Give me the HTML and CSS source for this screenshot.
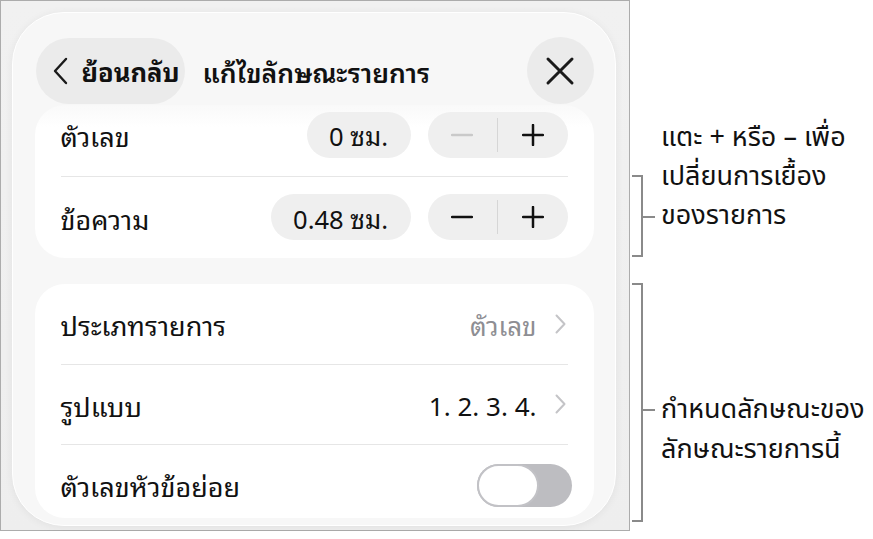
FILE: index.html
```html
<!DOCTYPE html>
<html lang="th">
<head>
<meta charset="utf-8">
<title>แก้ไขลักษณะรายการ</title>
<link rel="stylesheet" href="styles.css">
</head>
<body>
<div class="frame">
  <div class="panel">
    <header class="header">
      <button class="back">
        <svg class="back-chevron" viewBox="0 0 16 28" width="16" height="28"><path d="M14 2 L3 14 L14 26" fill="none" stroke="#1a1a1a" stroke-width="2.4" stroke-linecap="round" stroke-linejoin="round"/></svg>
        <span>ย้อนกลับ</span>
      </button>
      <h1 class="title">แก้ไขลักษณะรายการ</h1>
      <button class="close">
        <svg viewBox="0 0 30 30" width="30" height="30"><path d="M3 3 L27 27 M27 3 L3 27" fill="none" stroke="#1a1a1a" stroke-width="3" stroke-linecap="round"/></svg>
      </button>
    </header>

    <section class="card indent">
      <div class="row row-first">
        <span class="label">ตัวเลข</span>
        <div class="controls">
          <span class="value-pill">0 ซม.</span>
          <div class="stepper">
            <span class="step disabled"><svg viewBox="0 0 22 22" width="22" height="22"><path d="M1 11 H21" stroke="currentColor" stroke-width="2.5" stroke-linecap="round"/></svg></span>
            <span class="step-sep"></span>
            <span class="step"><svg viewBox="0 0 22 22" width="22" height="22"><path d="M1 11 H21 M11 1 V21" stroke="currentColor" stroke-width="2.5" stroke-linecap="round"/></svg></span>
          </div>
        </div>
      </div>
      <div class="row row-second">
        <span class="label">ข้อความ</span>
        <div class="controls">
          <span class="value-pill">0.48 ซม.</span>
          <div class="stepper">
            <span class="step"><svg viewBox="0 0 22 22" width="22" height="22"><path d="M1 11 H21" stroke="currentColor" stroke-width="2.5" stroke-linecap="round"/></svg></span>
            <span class="step-sep"></span>
            <span class="step"><svg viewBox="0 0 22 22" width="22" height="22"><path d="M1 11 H21 M11 1 V21" stroke="currentColor" stroke-width="2.5" stroke-linecap="round"/></svg></span>
          </div>
        </div>
      </div>
    </section>

    <section class="card options">
      <div class="row opt">
        <span class="label">ประเภทรายการ</span>
        <span class="detail muted">ตัวเลข<svg class="chev" viewBox="0 0 11 20" width="11" height="20"><path d="M1.5 1.5 L9.5 10 L1.5 18.5" fill="none" stroke="#c4c4c7" stroke-width="2" stroke-linecap="round" stroke-linejoin="round"/></svg></span>
      </div>
      <div class="row opt">
        <span class="label">รูปแบบ</span>
        <span class="detail">1. 2. 3. 4.<svg class="chev" viewBox="0 0 11 20" width="11" height="20"><path d="M1.5 1.5 L9.5 10 L1.5 18.5" fill="none" stroke="#c4c4c7" stroke-width="2" stroke-linecap="round" stroke-linejoin="round"/></svg></span>
      </div>
      <div class="row opt opt-last">
        <span class="label">ตัวเลขหัวข้อย่อย</span>
        <span class="toggle"><span class="knob"></span></span>
      </div>
    </section>
  </div>
</div>

<aside class="notes">
  <div class="note note-indent">
    <svg class="bracket" viewBox="0 0 26 82" width="26" height="82"><path d="M1 1 H11 V81 H1 M11 42 H24" fill="none" stroke="#8a8a8a" stroke-width="2"/></svg>
    <p class="note-text">แตะ + หรือ – เพื่อ<br>เปลี่ยนการเยื้อง<br>ของรายการ</p>
  </div>
  <div class="note note-style">
    <svg class="bracket" viewBox="0 0 26 239" width="26" height="239"><path d="M1 1 H11 V238 H1 M11 127 H24" fill="none" stroke="#8a8a8a" stroke-width="2"/></svg>
    <p class="note-text">กำหนดลักษณะของ<br>ลักษณะรายการนี้</p>
  </div>
</aside>
</body>
</html>
```

FILE: styles.css
```css
* { box-sizing: border-box; }

body {
  margin: 0;
  background: #ffffff;
  display: flex;
  align-items: flex-start;
  font-family: "Noto Sans Thai Looped", "Noto Sans Thai", "Noto Sans", "DejaVu Sans", sans-serif;
  color: #111111;
}

/* screenshot frame */
.frame {
  width: 630px;
  height: 531px;
  border: 1px solid #acacac;
  background: linear-gradient(180deg, #f1f1f1 0%, #eeeeee 100%);
  padding: 11px 13px 4px 11px;
  flex: none;
}

.panel {
  height: 514px;
  border-radius: 52px;
  background: #f7f7f7;
  border: 1.5px solid #ffffff;
  box-shadow: 0 1px 8px rgba(0, 0, 0, 0.06);
  padding: 24.5px 21.5px 0 21.5px;
  overflow: hidden;
}

/* top bar */
.header {
  display: flex;
  align-items: center;
  height: 66px;
}

button {
  font: inherit;
  color: inherit;
  border: 0;
  margin: 0;
  padding: 0;
}

.back {
  display: flex;
  align-items: center;
  gap: 14px;
  height: 66px;
  margin-left: 1px;
  padding: 0 6px 0 16px;
  border-radius: 33px;
  background: #ebebeb;
  font-size: 25.5px;
  font-weight: 700;
}

.title {
  margin: 0 0 0 17px;
  font-size: 26.5px;
  font-weight: 600;
  flex: 1;
}

.close {
  width: 67px;
  height: 67px;
  border-radius: 50%;
  background: #ebebeb;
  display: flex;
  align-items: center;
  justify-content: center;
}

/* grouped cards */
.card {
  background: #ffffff;
  border-radius: 30px;
  padding: 0 26px;
}

.indent {
  margin-top: 1px;
  background: linear-gradient(180deg, #f9f9f9 0px, #ffffff 22px);
}

.row {
  display: flex;
  align-items: center;
  justify-content: space-between;
  font-size: 27px;
}

.row + .row {
  border-top: 1.5px solid #e6e6e6;
}

.row-first {
  height: 71px;
  padding: 7px 0 18px;
  align-items: center;
}

.row-second {
  height: 82px;
}

.controls {
  display: flex;
  align-items: center;
  gap: 17px;
}

.value-pill {
  height: 46px;
  padding: 0 22.5px;
  border-radius: 23px;
  background: #efefef;
  display: flex;
  align-items: center;
  font-size: 25.5px;
}

.stepper {
  width: 140px;
  height: 46px;
  border-radius: 23px;
  background: #efefef;
  display: flex;
  align-items: center;
}

.step {
  flex: 1;
  display: flex;
  align-items: center;
  justify-content: center;
  color: #111111;
}

.step.disabled {
  color: #c9c9c9;
}

.step-sep {
  width: 1px;
  height: 34px;
  background: #d6d6d6;
}

.options {
  margin-top: 26px;
  height: 234px;
}

.opt {
  height: 80px;
}

.opt-last {
  height: 72px;
  align-items: flex-start;
  padding-top: 19px;
}

.opt-last .label {
  margin-top: -1px;
}

.detail {
  display: flex;
  align-items: center;
  gap: 18px;
  margin-right: 2px;
  font-size: 26px;
}

.muted {
  color: #8e8e93;
}

.toggle {
  width: 95px;
  height: 43px;
  border-radius: 22px;
  background: #bdbdc1;
  margin-right: -4px;
  display: flex;
  align-items: center;
}

.knob {
  width: 62px;
  height: 43px;
  border-radius: 22px;
  background: #ffffff;
  border: 2px solid #c2c2c6;
}

/* callouts beside the frame */
.notes {
  display: flex;
  flex-direction: column;
  padding-top: 118px;
  font-family: "Noto Sans Thai", "Noto Sans", "DejaVu Sans", sans-serif;
}

.note {
  display: flex;
  align-items: flex-start;
}

.bracket {
  margin-left: 1px;
  flex: none;
}

.note-indent .bracket {
  margin-top: 57px;
}

.note-style {
  margin-top: 26px;
}

.note-text {
  margin: 0 0 0 4px;
  font-size: 27px;
  line-height: 39px;
  color: #111111;
  white-space: nowrap;
}

.note-style .note-text {
  margin-top: 107px;
  line-height: 40px;
}
```
